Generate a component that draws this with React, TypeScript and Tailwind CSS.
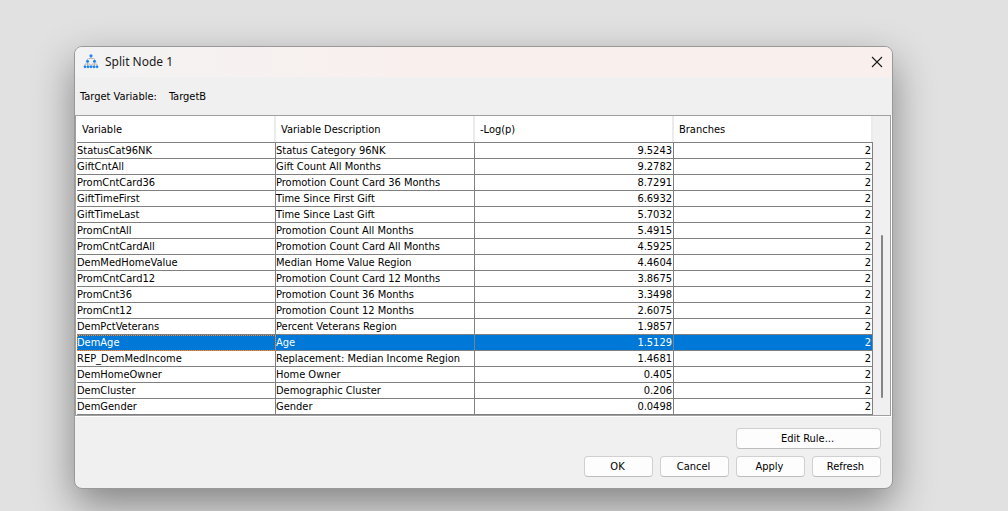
import React from "react";

type Row = [name: string, description: string, logP: string, branches: number];

const rows: Row[] = [
  ["StatusCat96NK", "Status Category 96NK", "9.5243", 2],
  ["GiftCntAll", "Gift Count All Months", "9.2782", 2],
  ["PromCntCard36", "Promotion Count Card 36 Months", "8.7291", 2],
  ["GiftTimeFirst", "Time Since First Gift", "6.6932", 2],
  ["GiftTimeLast", "Time Since Last Gift", "5.7032", 2],
  ["PromCntAll", "Promotion Count All Months", "5.4915", 2],
  ["PromCntCardAll", "Promotion Count Card All Months", "4.5925", 2],
  ["DemMedHomeValue", "Median Home Value Region", "4.4604", 2],
  ["PromCntCard12", "Promotion Count Card 12 Months", "3.8675", 2],
  ["PromCnt36", "Promotion Count 36 Months", "3.3498", 2],
  ["PromCnt12", "Promotion Count 12 Months", "2.6075", 2],
  ["DemPctVeterans", "Percent Veterans Region", "1.9857", 2],
  ["DemAge", "Age", "1.5129", 2],
  ["REP_DemMedIncome", "Replacement: Median Income Region", "1.4681", 2],
  ["DemHomeOwner", "Home Owner", "0.405", 2],
  ["DemCluster", "Demographic Cluster", "0.206", 2],
  ["DemGender", "Gender", "0.0498", 2],
];

const columns = ["Variable", "Variable Description", "-Log(p)", "Branches"];

function TreeIcon() {
  return (
    <svg width="16" height="16" viewBox="0 0 16 16" aria-hidden="true">
      <path
        d="M8 2.500v2.500M4.500 7V5.500Q4.500 4.500 5.500 4.500h5Q11.500 4.500 11.500 5.500V7M4.500 7v3M11.500 7v3M2 12.500v-2.500h5V12.500M9 12.500v-2.500h5V12.500M4.500 10v2.500M11.500 10v2.500"
        fill="none"
        stroke="#b9b9b9"
      />
      <g fill="#2185f7">
        <circle cx="8" cy="1.800" r="1.600" />
        <circle cx="4.500" cy="7.300" r="1.500" />
        <circle cx="11.500" cy="7.300" r="1.500" />
        <circle cx="2" cy="12.800" r="1.400" />
        <circle cx="5" cy="12.800" r="1.400" />
        <circle cx="8" cy="12.800" r="1.400" />
        <circle cx="11" cy="12.800" r="1.400" />
        <circle cx="14" cy="12.800" r="1.400" />
      </g>
    </svg>
  );
}

function DialogButton({ label, wide = false }: { label: string; wide?: boolean }) {
  return (
    <button
      type="button"
      className={`flex h-[21px] items-center justify-center rounded border border-[#d0d0d0] border-b-[#bdbdbd] bg-[#fdfdfd] pr-0.5 ${
        wide ? "w-[145px]" : "w-[69px]"
      }`}
    >
      {label}
    </button>
  );
}

export default function App() {
  return (
    <div className="min-h-screen overflow-hidden bg-[#e1e1e1] pt-[46px] pr-[115px] pb-[22px] pl-[74px] font-['DejaVu_Sans_Condensed','DejaVu_Sans',sans-serif] text-[11px] leading-[14px] text-black">
      <section
        role="dialog"
        aria-labelledby="dialog-title"
        className="overflow-hidden rounded-lg border border-[#999999] bg-[#f0f0f0] shadow-[0_16px_40px_rgba(0,0,0,0.42)]"
      >
        <header className="flex h-[30px] items-center bg-linear-to-r from-[#f3f3f3] to-[#f9f0ee] to-40% pr-2 pl-2">
          <TreeIcon />
          <h1
            id="dialog-title"
            className="ml-1.5 flex-1 font-['Noto_Sans','Open_Sans',sans-serif] text-[12px] text-[#1a1a1a]"
          >
            Split Node 1
          </h1>
          <button type="button" aria-label="Close" className="flex size-3.5 items-center justify-center">
            <svg width="12" height="12" viewBox="0 0 12 12" fill="none" stroke="#1a1a1a" strokeWidth="1.100">
              <path d="M1 1l10 10M11 1L1 11" />
            </svg>
          </button>
        </header>

        <div className="flex h-[38px] items-center gap-3 pt-0.5 pl-[5px]">
          <span>Target Variable:</span>
          <span>TargetB</span>
        </div>

        <div className="border-r border-b border-white">
          <div className="flex border border-[#a0a0a0] bg-white pl-px">
            <div className="min-w-0 flex-1">
              <table className="w-full table-fixed border-separate border-spacing-0">
                <thead>
                  <tr className="h-[27px]">
                    {columns.map((column) => (
                      <th
                        key={column}
                        scope="col"
                        className="border-b border-[#808080] p-0 text-left font-normal"
                      >
                        <div className="flex h-[26px] items-center border-r-2 border-[#ebebeb] pt-0.5 pl-[5px]">
                          {column}
                        </div>
                      </th>
                    ))}
                  </tr>
                </thead>
                <tbody>
                  {rows.map(([name, description, logP, branches]) => {
                    const selected = name === "DemAge";
                    const cell = "border-r border-b border-[#808080] py-0 pl-0 pr-px leading-[15px] whitespace-nowrap";
                    return (
                      <tr
                        key={name}
                        aria-selected={selected}
                        className={`h-4 ${selected ? "bg-[#0078d7] text-white" : "bg-white"}`}
                      >
                        <td
                          className={`${cell} ${
                            selected ? "outline-1 -outline-offset-1 outline-dotted outline-[#ff8728]" : ""
                          }`}
                        >
                          {name}
                        </td>
                        <td className={cell}>{description}</td>
                        <td className={`${cell} text-right`}>{logP}</td>
                        <td className={`${cell} text-right`}>{branches}</td>
                      </tr>
                    );
                  })}
                </tbody>
              </table>
            </div>
            <div className="flex w-[17px] justify-center bg-[#f0f0f0] pt-[119px] pb-[17px]">
              <div className="w-0.5 rounded-full bg-[#858585]" />
            </div>
          </div>
        </div>

        <footer className="flex flex-col items-end gap-[7px] p-[11px]">
          <DialogButton label="Edit Rule..." wide />
          <div className="flex gap-[7px]">
            <DialogButton label="OK" />
            <DialogButton label="Cancel" />
            <DialogButton label="Apply" />
            <DialogButton label="Refresh" />
          </div>
        </footer>
      </section>
    </div>
  );
}
